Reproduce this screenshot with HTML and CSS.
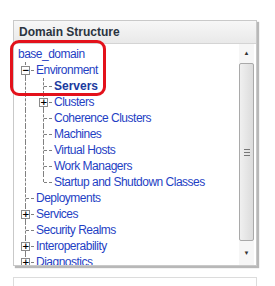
FILE: index.html
```html
<!DOCTYPE html>
<html lang="en">
<head>
    <meta charset="UTF-8">
    <title>Domain Structure</title>
    <link rel="stylesheet" href="styles.css">
</head>
<body>
    <div class="panel">
        <div class="panel-header">Domain Structure</div>
        <div class="panel-body">
            <div class="tree">
                <div class="row"><a href="#">base_domain</a></div>
                <div class="row"><span class="g tee"><span class="box">&minus;</span></span><a href="#">Environment</a></div>
                <div class="row"><span class="g line"></span><span class="g tee"></span><a href="#" class="current">Servers</a></div>
                <div class="row"><span class="g line"></span><span class="g tee"><span class="box">+</span></span><a href="#">Clusters</a></div>
                <div class="row"><span class="g line"></span><span class="g tee"></span><a href="#">Coherence Clusters</a></div>
                <div class="row"><span class="g line"></span><span class="g tee"></span><a href="#">Machines</a></div>
                <div class="row"><span class="g line"></span><span class="g tee"></span><a href="#">Virtual Hosts</a></div>
                <div class="row"><span class="g line"></span><span class="g tee"></span><a href="#">Work Managers</a></div>
                <div class="row"><span class="g line"></span><span class="g end"></span><a href="#">Startup and Shutdown Classes</a></div>
                <div class="row"><span class="g tee"></span><a href="#">Deployments</a></div>
                <div class="row"><span class="g tee"><span class="box">+</span></span><a href="#">Services</a></div>
                <div class="row"><span class="g tee"></span><a href="#">Security Realms</a></div>
                <div class="row"><span class="g tee"><span class="box">+</span></span><a href="#">Interoperability</a></div>
                <div class="row"><span class="g tee"><span class="box">+</span></span><a href="#">Diagnostics</a></div>
            </div>
            <div class="scrollbar">
                <div class="sb-btn up">&#9650;</div>
                <div class="sb-thumb"><span class="grip"></span></div>
                <div class="sb-btn down">&#9660;</div>
            </div>
            <div class="highlight"></div>
        </div>
    </div>
    <div class="panel next"></div>
</body>
</html>
```

FILE: styles.css
```css
/* Base */
body, html {
    margin: 0;
    padding: 0;
    background-color: #ffffff;
    font-family: "Liberation Sans", Arial, sans-serif;
    font-size: 12px;
}

body {
    padding: 20px 0 0 13px;
}

.panel {
    width: 242px;
    border: 1px solid #c9c9c9;
    box-shadow: 2px 2px 1px #b8b8b8;
    background-color: #ffffff;
}

.panel-header {
    height: 22px;
    line-height: 23px;
    padding-left: 5px;
    font-weight: bold;
    font-size: 12px;
    color: #2b3440;
    background: linear-gradient(#f7f7f7, #e9e9e9);
    border-bottom: 1px solid #d4d4d4;
}

.panel-body {
    position: relative;
    display: flex;
    height: 221px;
}

/* Tree */
.tree {
    flex: 1;
    padding: 2px 0 0 3px;
    overflow: hidden;
}

.row {
    display: flex;
    align-items: center;
    height: 16px;
    white-space: nowrap;
}

.row a {
    color: #1f3fc4;
    text-decoration: none;
    padding-left: 1px;
    letter-spacing: -0.5px;
}

.row a.current {
    font-weight: bold;
    color: #1b3a9e;
    letter-spacing: 0;
}

.g {
    position: relative;
    flex: none;
    width: 18px;
    height: 16px;
}

.g.line::before,
.g.tee::before,
.g.end::before {
    content: "";
    position: absolute;
    left: 8px;
    top: 0;
    height: 16px;
    border-left: 1px dashed #808080;
}

.g.end::before {
    height: 8px;
}

.g.tee::after,
.g.end::after {
    content: "";
    position: absolute;
    left: 9px;
    top: 8px;
    width: 8px;
    border-top: 1px dashed #808080;
}

.box {
    position: absolute;
    left: 4px;
    top: 4px;
    width: 7px;
    height: 7px;
    border: 1px solid #8a8a8a;
    background-color: #ffffff;
    color: #000000;
    font: bold 9px/7px "DejaVu Sans", sans-serif;
    text-align: center;
    z-index: 1;
}

/* Scrollbar */
.scrollbar {
    display: flex;
    flex-direction: column;
    width: 15px;
    margin-right: 2px;
    background-color: #f6f6f6;
}

.sb-btn {
    font-size: 6px;
    text-align: center;
    color: #333333;
}

.sb-btn.up {
    height: 19px;
    line-height: 19px;
}

.sb-btn.down {
    height: 24px;
    line-height: 24px;
}

.sb-thumb {
    flex: 1;
    display: flex;
    align-items: center;
    justify-content: center;
    border: 1px solid #a9a9a9;
    border-radius: 2px;
    background: linear-gradient(90deg, #f0f0f0, #dcdcdc);
}

.grip {
    width: 6px;
    height: 5px;
    border-top: 1px solid #777;
    border-bottom: 1px solid #777;
    position: relative;
}

.grip::after {
    content: "";
    position: absolute;
    left: 0;
    right: 0;
    top: 2px;
    border-top: 1px solid #777;
}

/* Annotation */
.highlight {
    position: absolute;
    left: -4px;
    top: -4px;
    width: 90px;
    height: 50px;
    border: 3px solid #e3111b;
    border-radius: 9px;
}

.panel.next {
    margin-top: 11px;
    height: 20px;
    border-color: #dcdcdc;
    box-shadow: none;
}
```
